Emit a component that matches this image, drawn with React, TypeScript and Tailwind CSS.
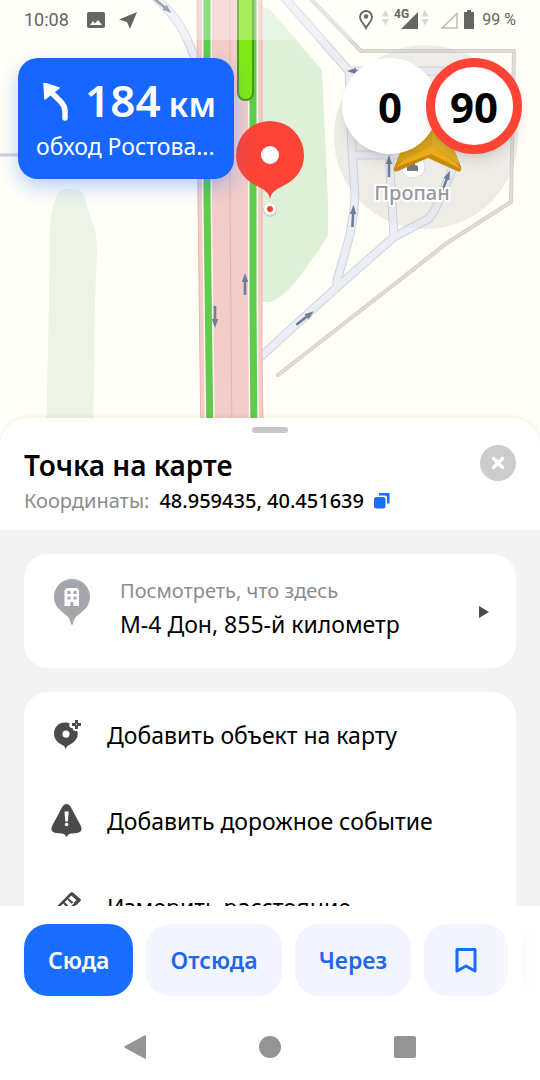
import type { ReactNode } from 'react';

const menuItems = [
  { label: 'Добавить объект на карту', icon: <AddPlaceIcon /> },
  { label: 'Добавить дорожное событие', icon: <RoadEventIcon /> },
  { label: 'Измерить расстояние', icon: <RulerIcon /> },
];

function AddPlaceIcon() {
  return (
    <svg viewBox="0 0 32 36" className="w-8 h-9" fill="#4a4a4a">
      <path
        fillRule="evenodd"
        d="M15 5.500C8 5 3 10 3 16.500c0 6 4 9.500 8.500 11.500 1.500.7 2.500 2 3.200 4.500.7-2.500 1.700-3.800 3.300-4.500 4.500-2 8.700-5.500 8.700-11 0-1.200-.2-2.200-.6-3.200-2.500 1-4.600-.7-4.400-2.800-2.700.2-4.400-2.400-2.900-4.800A12 12 0 0 0 15 5.500ZM15 13.500a3.600 3.600 0 1 1 0 7.200 3.600 3.600 0 0 1 0-7.200Z"
      />
      <path d="M25.500 3v9M21 7.500h9" stroke="#4a4a4a" strokeWidth="3" />
      <path d="M25.500 6.800v1.400" stroke="#fff" strokeWidth="1" />
    </svg>
  );
}

function RoadEventIcon() {
  return (
    <svg viewBox="0 0 32 36" className="w-8 h-9" fill="#4a4a4a">
      <path d="M15.500 1c-1.800 0-3 .9-4 2.600L1.600 22c-2.600 5-.6 7.500 3.400 8 3 .4 5.500.4 7 .7 1.700.4 2.500 1.600 3.500 3.600 1-2 1.800-3.200 3.500-3.600 1.500-.3 4-.3 7-.7 4-.5 6-3 3.400-8L19.500 3.600C18.500 1.900 17.300 1 15.500 1Z" />
      <path d="M13.500 8.500h4.200l-.8 10h-2.600z" fill="#fff" />
      <circle cx="15.600" cy="21.500" r="1.800" fill="#fff" />
    </svg>
  );
}

function RulerIcon() {
  return (
    <svg viewBox="0 0 32 36" className="w-8 h-9" fill="none" stroke="#4a4a4a" strokeWidth="2.500" strokeLinejoin="round">
      <path d="M4 21 20.500 4.500l7.500 6.500L11 28Z" />
      <path d="m12.500 13.500 4 4M17 10l4.500 4M8.500 17.500l4 4" strokeWidth="2.200" />
      <path d="m20.500 4.500 7.500 6.500-4 4" strokeWidth="3.500" />
    </svg>
  );
}

function BuildingPin() {
  return (
    <svg viewBox="0 0 36 46" className="w-9 h-[46px]">
      <path
        d="M18 0C8 0 0 8 0 18c0 7 4 12 10 16.500 4 3 6.500 5.500 7 11h2c.5-5.500 3-8 7-11C32 30 36 25 36 18 36 8 28 0 18 0Z"
        fill="#a3a6aa"
      />
      <path
        fillRule="evenodd"
        d="M13 9h10l2 2v16h-5.500v-4h-3v4H10.500V11ZM13.500 12v3h3v-3Zm6 0v3h3v-3Zm-6 5.500v3h3v-3Zm6 0v3h3v-3Z"
        fill="#fff"
      />
    </svg>
  );
}

function RoadArrow({ x, y, angle }: { x: number; y: number; angle: number }) {
  return (
    <path
      d="M-1.300 11V-2H-3.200L0-11 3.200-2H1.300V11Z"
      fill="#6f7e92"
      transform={`translate(${x} ${y}) rotate(${angle})`}
    />
  );
}

const serviceRoads = [
  'M154-4C176 16 188 34 197 66',
  'M276-12 349 71 352 150 355 195C354 232 343 256 336 285',
  'M349 71H445',
  'M351 155H425',
  'M389 155 394 236',
  'M256 361 336 288 394 237 428 219Q434 213 438 203L456 160',
];

function MapCanvas() {
  return (
    <svg
      viewBox="0 0 540 444"
      preserveAspectRatio="xMidYMin slice"
      className="absolute inset-0 w-full h-full"
      aria-hidden="true"
    >
      <rect width="540" height="444" fill="#fffff7" />
      <path d="M46 444 49 300 50 225Q54 190 64 189H76Q84 190 87 207L96 232 97 250 95 300 93 444Z" fill="#edf4e6" />
      <path d="M260 5Q268 8 273 13L322 70 328 200V235Q322 247 312 259 300 278 290 288 276 302 268 302H260Z" fill="#dff0d8" />
      <path d="M0 155H30" stroke="#cfcfd2" strokeWidth="3" />

      <circle cx="426" cy="137" r="92" fill="#f3f2ec" />
      <g fill="none" strokeLinejoin="round">
        <path d="M308-4 361 51H514L511 202 447 243 278 375" stroke="#d2d0cc" strokeWidth="4" strokeLinecap="round" />
        <path d="M308-4 361 51H514L511 202 447 243 278 375" stroke="#dfddda" strokeWidth="2" strokeLinecap="round" />
        {serviceRoads.map((d) => (
          <path key={d} d={d} stroke="#cfd3dd" strokeWidth="9" />
        ))}
        {serviceRoads.map((d) => (
          <path key={d} d={d} stroke="#eceef6" strokeWidth="7" />
        ))}
      </g>
      <circle cx="426" cy="137" r="92" fill="#8c8670" opacity=".05" />

      {/* highway with both carriageways */}
      <path d="M197 0 198 200 201 444H264L262 350V0Z" fill="#f2cdc9" />
      <g fill="none">
        <path d="M197 0 198 200 201 444M230 0V200L232 444M262 0V350L263 444" stroke="#e8b3ae" strokeWidth="1" />
        <path d="M207 0V200L210 444M253 0V300L254 444" stroke="#fff5f0" strokeWidth="10" />
        <path d="M207 0V200L210 444M253 0V300L254 444" stroke="#5fcc4b" strokeWidth="7" />
      </g>
      <rect x="238" y="-20" width="15" height="120" rx="7" fill="#80e814" stroke="#4e9819" strokeWidth="2" />
      <RoadArrow x={163} y={6} angle={130} />
      <RoadArrow x={245} y={284} angle={0} />
      <RoadArrow x={215} y={317} angle={180} />
      <RoadArrow x={305} y={318} angle={52} />
      <RoadArrow x={353} y={216} angle={3} />
      <RoadArrow x={358} y={71} angle={270} />
      <RoadArrow x={389} y={166} angle={0} />
      <RoadArrow x={446} y={181} angle={20} />

      <circle cx="413" cy="166" r="12" fill="#fff" stroke="#dcdcdc" />
      <path d="M407 171V166l3-1v-4h5v4l3 1v5Z" fill="#77777c" />
      <path d="M428 84 394 168Q393 173 398 171L428 158 457 171Q462 173 461 167Z" fill="#c9880f" />
      <path d="M428 84 396 164 432 146Z" fill="#dba51c" />
      <path d="M428 84 432 146 460 165Z" fill="#dfb02a" />
      <path d="M394 168 405 159 432 146 455 162 461 169 431 154Z" fill="#efae1c" />
      <text
        x="412"
        y="200"
        textAnchor="middle"
        fontFamily="'Noto Sans', sans-serif"
        fontSize="20"
        fontWeight="500"
        fill="#97979b"
        stroke="#fff"
        strokeWidth="4"
        strokeLinejoin="round"
        paintOrder="stroke"
      >
        Пропан
      </text>

      <path d="M270 121a34 34 0 0 1 34 34c0 16-10 26-23 32-6 3-10 6-11 12-1-6-5-9-11-12-13-6-23-16-23-32a34 34 0 0 1 34-34Z" fill="#fd4437" />
      <circle cx="270" cy="155" r="9" fill="#fff" />
      <circle cx="270" cy="210" r="7" fill="#000" opacity=".12" />
      <circle cx="270" cy="209" r="6" fill="#fff" />
      <circle cx="270" cy="209" r="3" fill="#f4402f" />
    </svg>
  );
}

function StatusBar() {
  return (
    <div className="relative flex items-center justify-between h-10 px-6 bg-white/30 text-[#656563]">
      <div className="flex items-center gap-[18px]">
        <span className="font-[Roboto] text-lg whitespace-nowrap">10:08</span>
        <svg viewBox="0 0 52 18" className="w-[52px] h-[18px]" fill="#656563">
          <path
            fillRule="evenodd"
            d="M2 1h14a2 2 0 0 1 2 2v12a2 2 0 0 1-2 2H2a2 2 0 0 1-2-2V3a2 2 0 0 1 2-2Zm1 13h12l-4-5-3 3.500L6 10Z"
          />
          <path d="M50 1 43 18l-3-7-8-2.500Z" />
        </svg>
      </div>
      <div className="flex items-center">
        <svg viewBox="0 0 120 24" className="w-[120px] h-6">
          <path
            d="M8 3a6 6 0 0 1 6 6c0 4-4 7-6 11-2-4-6-7-6-11a6 6 0 0 1 6-6Z"
            fill="none"
            stroke="#656563"
            strokeWidth="1.800"
          />
          <circle cx="8" cy="8.500" r="2.200" fill="#656563" />
          <path d="m27.500 2 3.500 6.500h-7ZM24 11h7l-3.500 6.500ZM67 2l3.500 6.500h-7ZM63.500 11h7L67 17.500Z" fill="#d9d9d3" />
          <path d="M60 4v17H43Z" fill="#656563" />
          <path d="M99 5.500v14.500H84Z" fill="none" stroke="#bdbdb8" strokeWidth="1.500" />
          <path d="M109 2h4v2h3v17h-10V4h3Z" fill="#656563" />
          <text x="36" y="10" fontFamily="Roboto, sans-serif" fontSize="12" fontWeight="700" fill="#656563">
            4G
          </text>
        </svg>
        <span className="ml-1 font-[Roboto] text-base whitespace-nowrap">99 %</span>
      </div>
    </div>
  );
}

function ManeuverCard() {
  return (
    <div className="w-[216px] h-[121px] px-[18px] pt-[18px] rounded-[20px] bg-[#1766ff] text-white shadow-[0_8px_20px_rgba(23,102,255,0.3)]">
      <div className="flex items-center justify-between h-[52px] pl-[7px]">
        <svg viewBox="0 0 26 38" className="w-[26px] h-[38px]">
          <path d="M1 0 16 5 2 16Z" fill="#fff" stroke="#fff" strokeWidth="1.500" strokeLinejoin="round" />
          <path d="m8 9 10 10q4 4 4 9v7" fill="none" stroke="#fff" strokeWidth="5.500" strokeLinecap="round" />
        </svg>
        <div className="flex items-baseline gap-2 font-semibold leading-[52px]">
          <span className="text-[44px]">184</span>
          <span className="text-[34px]">км</span>
        </div>
      </div>
      <p className="mt-0.5 text-[23px] leading-8 whitespace-nowrap">обход Ростова...</p>
    </div>
  );
}

function SpeedBadges() {
  return (
    <div className="flex font-bold text-[42px] text-black">
      <div className="flex items-center justify-center w-24 h-24 rounded-full bg-white shadow-lg">0</div>
      <div className="relative -ml-3 flex items-center justify-center w-24 h-24 rounded-full bg-white border-[9px] border-[#ff4436] shadow-lg">
        90
      </div>
    </div>
  );
}

function ActionButton({ children, label, primary }: { children: ReactNode; label?: string; primary?: boolean }) {
  const tone = primary ? 'bg-[#196dff] text-white' : 'bg-[#f2f5fd] text-[#1f69e8]';
  return (
    <button
      type="button"
      aria-label={label}
      className={`shrink-0 flex items-center justify-center h-[72px] px-6 rounded-3xl text-[23px] font-semibold ${tone}`}
    >
      {children}
    </button>
  );
}

export default function App() {
  return (
    <div className="flex flex-col h-screen overflow-hidden bg-white font-['Noto_Sans',sans-serif] text-black">
      <section className="relative shrink-0 h-[444px] overflow-hidden">
        <MapCanvas />
        <StatusBar />
        <div className="relative flex items-start justify-between px-[18px] pt-[18px]">
          <ManeuverCard />
          <SpeedBadges />
        </div>
      </section>

      <main className="relative -mt-[26px] flex-1 min-h-0 flex flex-col rounded-t-[28px] bg-white shadow-[0_-1px_4px_rgba(0,0,0,0.08)]">
        <header className="shrink-0 h-[112px] pt-[9px] px-6">
          <div className="mx-auto w-9 h-1.5 rounded-full bg-[#c8c8ca]" />
          <div className="flex justify-between">
            <div>
              <h1 className="mt-3.5 text-[28px] leading-9 font-semibold">Точка на карте</h1>
              <div className="flex items-center gap-2.5 text-xl leading-9 whitespace-nowrap">
                <span className="text-[#8c8c8c]">Координаты:</span>
                <span className="font-medium">48.959435, 40.451639</span>
                <button type="button" aria-label="Скопировать координаты">
                  <svg viewBox="0 0 16 16" className="w-4 h-4" fill="#196dff">
                    <rect x="0" y="4" width="11.500" height="11.500" rx="2.500" />
                    <path d="M5 0H15.500V10.500H13V4.500a2 2 0 0 0-2-2H5Z" />
                  </svg>
                </button>
              </div>
            </div>
            <button
              type="button"
              aria-label="Закрыть"
              className="mt-3 flex items-center justify-center w-9 h-9 rounded-full bg-[#cccccc]"
            >
              <svg viewBox="0 0 12 12" className="w-3 h-3" stroke="#fff" strokeWidth="3.500" strokeLinecap="round">
                <path d="m1.500 1.500 9 9M10.500 1.500l-9 9" />
              </svg>
            </button>
          </div>
        </header>

        <div className="flex-1 min-h-0 overflow-hidden px-6 pt-6 bg-[#f3f3f3]">
          <a href="#place" className="flex items-start h-[114px] pt-[25px] pl-[30px] pr-[27px] rounded-3xl bg-white">
            <BuildingPin />
            <span className="flex-1 -mt-1 ml-[30px] flex flex-col whitespace-nowrap">
              <span className="text-xl leading-8 text-[#8c8c8c]">Посмотреть, что здесь</span>
              <span className="text-[23px] leading-[34px]">М-4 Дон, 855-й километр</span>
            </span>
            <svg viewBox="0 0 10 12" className="self-center w-2.5 h-3 -mt-6" fill="#4a4a4a">
              <path d="M0 0 10 6 0 12Z" />
            </svg>
          </a>
          <ul className="mt-6 rounded-3xl bg-white">
            {menuItems.map((item) => (
              <li key={item.label}>
                <button type="button" className="flex items-center gap-6 w-full h-[86px] pl-[27px] text-[23px] whitespace-nowrap">
                  {item.icon}
                  {item.label}
                </button>
              </li>
            ))}
          </ul>
        </div>

        <div className="relative shrink-0 flex gap-[13px] pl-6 pt-[18px] overflow-hidden bg-white">
          <ActionButton primary>Сюда</ActionButton>
          <ActionButton>Отсюда</ActionButton>
          <ActionButton>Через</ActionButton>
          <ActionButton label="Сохранить">
            <svg viewBox="0 0 36 26" className="w-9 h-[26px]" fill="none" stroke="#196dff" strokeWidth="3" strokeLinejoin="round">
              <path d="M9 2.500h18v21.500l-9-5-9 5Z" />
            </svg>
          </ActionButton>
          <ActionButton label="Поделиться">
            <span className="w-9" />
          </ActionButton>
          <div className="absolute right-0 top-0 w-12 h-full bg-linear-to-r from-white/0 to-white" />
        </div>

        <nav className="shrink-0 mt-[18px] flex items-center justify-center gap-[113px] h-[66px]">
          <button type="button" aria-label="Назад">
            <svg viewBox="0 0 22 24" className="w-[22px] h-6" fill="#949494">
              <path d="M22 1v22q0 1-1 .7L1 13q-1.500-1 0-2L20.500.5Q22 0 22 1Z" />
            </svg>
          </button>
          <button type="button" aria-label="Домой" className="w-[22px] h-[22px] rounded-full bg-[#949494]" />
          <button type="button" aria-label="Недавние" className="w-[22px] h-[22px] rounded-xs bg-[#949494]" />
        </nav>
      </main>
    </div>
  );
}
